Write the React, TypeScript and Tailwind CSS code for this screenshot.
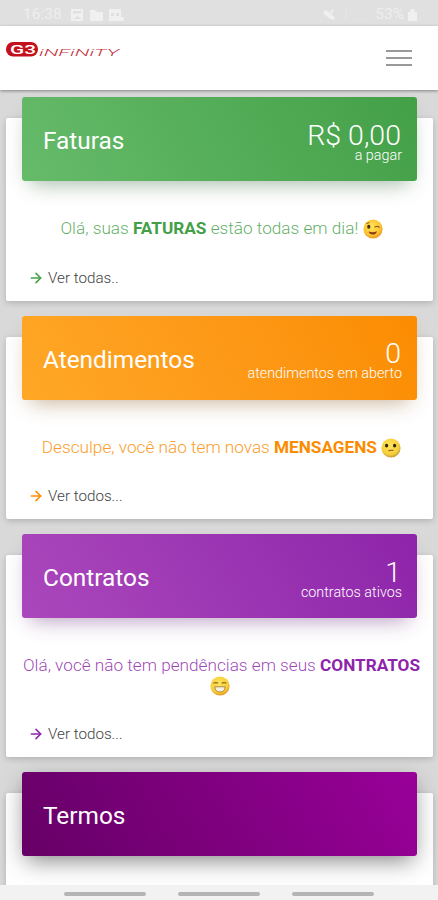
import type { ReactNode } from 'react';
import { ArrowRight } from 'lucide-react';

function Logo() {
  return (
    <svg width="116" height="18" viewBox="0 0 116 18" className="block">
      <rect x="0" y="1" width="32" height="14.5" rx="7" fill="#c4101c" />
      <text
        x="4"
        y="13"
        fill="#fff"
        fontFamily="Roboto, sans-serif"
        fontWeight="500"
        fontSize="13"
        textLength="26"
        lengthAdjust="spacingAndGlyphs"
      >
        G3
      </text>
      <text
        x="33"
        y="15.2"
        fill="#c4303c"
        fontFamily="Roboto, sans-serif"
        fontStyle="italic"
        fontWeight="300"
        fontSize="8.5"
        textLength="80"
        lengthAdjust="spacingAndGlyphs"
      >
        iNFiNiTY
      </text>
    </svg>
  );
}

function Emoji({ kind }: { kind: 'wink' | 'neutral' | 'grin' }) {
  return (
    <svg
      width="20"
      height="20"
      viewBox="0 0 20 20"
      className={kind === 'grin' ? 'mr-1 inline-block align-[-5px]' : 'inline-block align-[-5px]'}
    >
      <defs>
        <radialGradient id={`face-${kind}`} cx="0.45" cy="0.38" r="0.65">
          <stop offset="0" stopColor="#ffe45c" />
          <stop offset="0.7" stopColor={kind === 'wink' ? '#fbc32f' : '#f7cf3a'} />
          <stop offset="1" stopColor={kind === 'neutral' ? '#b9923a' : '#e58a1f'} />
        </radialGradient>
      </defs>
      <circle cx="10" cy="10" r="9.6" fill={`url(#face-${kind})`} />
      {kind === 'wink' && (
        <>
          <ellipse cx="5.8" cy="7.8" rx="1.6" ry="2" fill="#43301a" />
          <path d="M3.2 4.6 L6.6 3.6" stroke="#9b6a1c" strokeWidth="1" />
          <path
            d="M11.5 8.2 Q14 6.4 16.6 8.4"
            fill="none"
            stroke="#9b5f1c"
            strokeWidth="1.2"
          />
          <path d="M5.6 12.6 Q10 14.2 14 12.2 Q13 15.8 9.6 15.6 Q6.4 15.4 5.6 12.6 Z" fill="#8c3b18" />
        </>
      )}
      {kind === 'neutral' && (
        <>
          <ellipse cx="5.6" cy="7.6" rx="1.6" ry="1.9" fill="#2f2719" />
          <ellipse cx="13.6" cy="7.6" rx="1.6" ry="1.9" fill="#2f2719" />
          <path
            d="M7.4 12.6 Q10 11.9 12.4 12.4"
            fill="none"
            stroke="#8a5a22"
            strokeWidth="1.1"
          />
        </>
      )}
      {kind === 'grin' && (
        <>
          <path
            d="M3.4 7.2 Q5.8 6 8.2 7.2 M11.6 7.2 Q14 6 16.4 7.2"
            fill="none"
            stroke="#8e6a1e"
            strokeWidth="1.2"
          />
          <path
            d="M4.8 10.8 H15.2 Q15 16 10 16 Q5 16 4.8 10.8 Z"
            fill="#f4f0e6"
            stroke="#a9802c"
            strokeWidth="0.9"
          />
        </>
      )}
    </svg>
  );
}

interface CardProps {
  title: string;
  value?: string;
  caption?: string;
  header: string;
  height: string;
  color?: string;
  textColor?: string;
  link?: string;
  children?: ReactNode;
}

function Card({
  title,
  value,
  caption,
  header,
  height,
  color,
  textColor,
  link,
  children,
}: CardProps) {
  return (
    <section
      className={`relative flex shrink-0 flex-col rounded-[2px] bg-white px-4 shadow-[0_2px_6px_rgba(0,0,0,0.18)] ${height}`}
    >
      <div
        className={`-mt-[21px] flex h-[84px] shrink-0 items-center justify-between rounded-[3px] pr-[15px] pl-[21px] text-white ${header}`}
      >
        <h2 className="pt-1 text-[24.4px] leading-8">{title}</h2>
        {value && (
          <div className="flex flex-col items-end pt-[7px] font-light">
            <span className="pr-px text-[28.5px] leading-[26px]">{value}</span>
            <span className="text-[14.35px] leading-[14px]">{caption}</span>
          </div>
        )}
      </div>
      {children && (
        <p
          className={`mt-[37px] -mr-[7px] -ml-[3px] text-center text-[17.2px] leading-5 font-light ${textColor}`}
        >
          {children}
        </p>
      )}
      {link && (
        <a className="mt-auto mb-[13px] ml-1.5 flex items-center gap-1 text-[15.2px] leading-5 font-light text-[#444]">
          <ArrowRight size={16} strokeWidth={2.3} className={color} />
          {link}
        </a>
      )}
    </section>
  );
}

function StatusBar() {
  return (
    <div className="flex h-[26px] shrink-0 items-center bg-[#e0e0e0] pt-[3px] pr-[21px] pl-[23px] text-[15.5px] text-[#eee]">
      <span>16:38</span>
      <svg width="56" height="14" viewBox="0 0 56 14" fill="#f0f0f0" className="ml-2">
        <path fillRule="evenodd" d="M1 1h12v12H1z M3 3v3l8-1V3z M3 11h8L8 8z" />
        <path d="M20 2h5l2 2h6v9H20z" />
        <path fillRule="evenodd" d="M39 1h12v8h3v4H39z M41 5v3h3V5z M46 5v3h3V5z" />
      </svg>
      <svg width="54" height="14" viewBox="0 0 54 14" fill="#f0f0f0" className="ml-auto">
        <path d="M0 4l3-2 5 4 4 4-2 2-4-2-5-4z M7 4l3-3 1 1-3 4z" />
        <path d="M22 1h2v11h-2z M31 11h2v2h-2z M36 11h2v2h-2z M41 11h2v2h-2z" opacity="0.3" />
      </svg>
      <span className="-ml-0.5 text-[15.5px]">53%</span>
      <svg width="9" height="13" viewBox="0 0 9 13" fill="#f0f0f0" className="ml-1">
        <path d="M2.5 1h4v3H9v9H0V4h2.5z" />
      </svg>
    </div>
  );
}

export default function App() {
  return (
    <div className="flex h-[900px] w-[438px] flex-col overflow-hidden bg-[#d9d9d9] font-[Roboto,sans-serif]">
      <StatusBar />
      <header className="relative z-10 flex h-16 shrink-0 items-start justify-between bg-white pr-[26px] pl-1.5 shadow-[0_1px_3px_rgba(0,0,0,0.4)]">
        <div className="pt-[15px]">
          <Logo />
        </div>
        <button className="mt-6 flex flex-col gap-[5px]">
          <span className="h-[2px] w-[26px] bg-[#999]" />
          <span className="h-[2px] w-[26px] bg-[#999]" />
          <span className="h-[2px] w-[26px] bg-[#999]" />
        </button>
      </header>

      <main className="flex min-h-0 flex-1 flex-col gap-9 overflow-hidden pt-7 pr-[5px] pl-1.5">
        <Card
          title="Faturas"
          value="R$ 0,00"
          caption="a pagar"
          height="h-[182.5px]"
          header="bg-linear-60 from-[#66bb6a] to-[#43a047] shadow-[0_10px_20px_-8px_rgba(40,90,45,0.45)]"
          color="text-[#43a047]"
          textColor="text-[#43a047]/85"
          link="Ver todas.."
        >
          Olá, suas <b className="font-bold text-[#43a047]">FATURAS</b> estão todas em dia!{' '}
          <Emoji kind="wink" />
        </Card>
        <Card
          title="Atendimentos"
          value="0"
          caption="atendimentos em aberto"
          height="h-[182.5px]"
          header="bg-linear-60 from-[#ffa726] to-[#fb8c00] shadow-[0_10px_20px_-8px_rgba(130,80,20,0.45)]"
          color="text-[#fb8c00]"
          textColor="text-[#fb8c00]/85"
          link="Ver todos..."
        >
          Desculpe, você não tem novas <b className="font-bold text-[#fb8c00]">MENSAGENS</b>{' '}
          <Emoji kind="neutral" />
        </Card>
        <Card
          title="Contratos"
          value="1"
          caption="contratos ativos"
          height="h-[202px]"
          header="bg-linear-60 from-[#ab47bc] to-[#8e24aa] shadow-[0_10px_20px_-8px_rgba(90,30,110,0.45)]"
          color="text-[#8e24aa]"
          textColor="text-[#8e24aa]/85"
          link="Ver todos..."
        >
          Olá, você não tem pendências em seus{' '}
          <b className="font-bold text-[#8e24aa]">CONTRATOS</b> <Emoji kind="grin" />
        </Card>
        <Card
          title="Termos"
          height="h-[182.5px]"
          header="bg-linear-60 from-[#660066] to-[#990099] shadow-[0_8px_22px_-4px_rgba(0,0,0,0.5)]"
        />
      </main>

      <nav className="flex h-[15px] shrink-0 items-center justify-center gap-8 bg-[#f2f2f2] pt-0.5">
        <span className="h-1 w-[82px] rounded-full bg-[#b4b4b4]" />
        <span className="h-1 w-[82px] rounded-full bg-[#b4b4b4]" />
        <span className="h-1 w-[82px] rounded-full bg-[#b4b4b4]" />
      </nav>
    </div>
  );
}
